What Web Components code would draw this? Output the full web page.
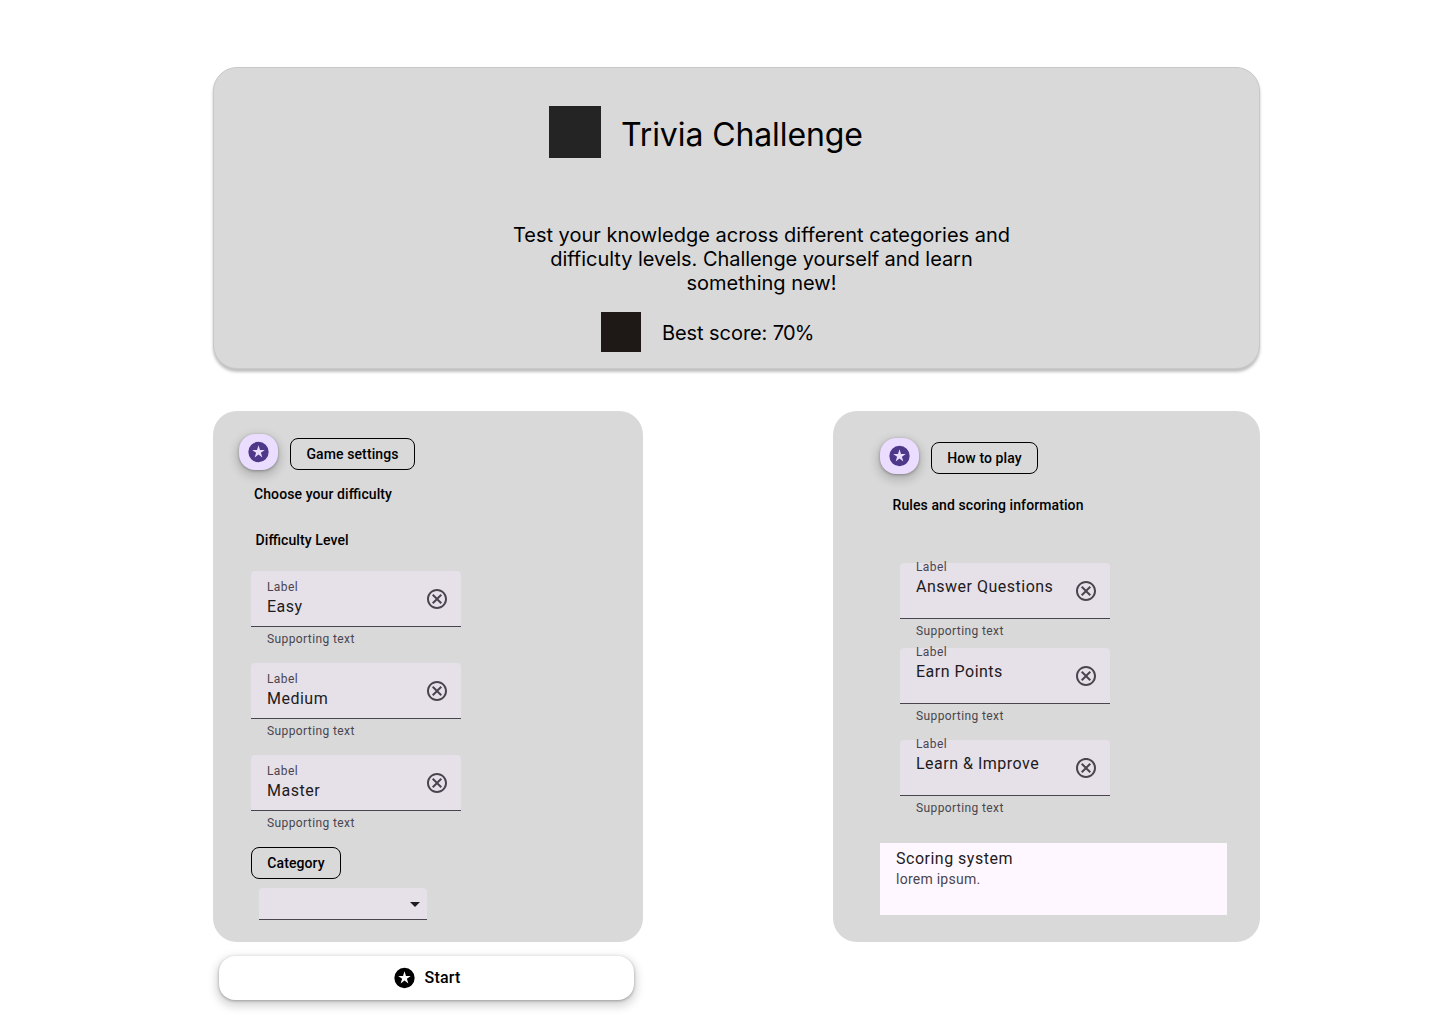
<!DOCTYPE html>
<html lang="en">
<head>
<meta charset="utf-8">
<title>Trivia Challenge</title>
<style>
html,body{margin:0;background:#fff;color:#000}
body{width:1440px;height:1024px;overflow:hidden;font-family:Roboto,"Liberation Sans",sans-serif}
</style>
</head>
<body>
<trivia-app></trivia-app>
<script>
function define(name, render) {
  customElements.define(name, class extends HTMLElement {
    connectedCallback() {
      if (this.shadowRoot) return;
      this.attachShadow({ mode: 'open' }).innerHTML = render(this);
    }
  });
}

const icons = {
  stars: 'M12.5 1.85a10.15 10.15 0 1 0 0 20.3a10.15 10.15 0 1 0 0-20.3zM8.65 17.5L10.1 12.8 6.25 10h4.75L12.5 5.2 14 10h4.75L14.9 12.8l1.45 4.7L12.5 14.6z',
  cancel: 'M8.4 17L12 13.4 15.6 17 17 15.6 13.4 12 17 8.4 15.6 7 12 10.6 8.4 7 7 8.4 10.6 12 7 15.6zM12 2C6.47 2 2 6.47 2 12s4.47 10 10 10 10-4.47 10-10S17.53 2 12 2zm0 18c-4.41 0-8-3.59-8-8s3.59-8 8-8 8 3.59 8 8-3.59 8-8 8z',
  drop: 'M7 10l5 5 5-5z'
};

define('ui-icon', el => `
<style>:host{display:block;width:24px;height:24px;flex:none}svg{display:block;width:100%;height:100%;fill:currentColor}</style>
<svg viewBox="0 0 24 24"><path fill-rule="evenodd" d="${icons[el.getAttribute('name')]}"/></svg>`);

define('ui-fab', () => `
<style>:host{display:flex;align-items:center;justify-content:center;width:39px;height:36px;border-radius:16px;background:#eaddff;color:#4f378a;box-shadow:0 1px 3px rgba(0,0,0,.3),0 4px 8px 3px rgba(0,0,0,.15)}ui-icon{margin-right:1px}</style>
<ui-icon name="stars"></ui-icon>`);

define('ui-chip', () => `
<style>:host{display:flex;align-items:center;justify-content:center;box-sizing:border-box;height:32px;border:1px solid #000;border-radius:8px;font-size:14px;line-height:20px;font-weight:500;letter-spacing:.1px;white-space:nowrap}</style>
<slot></slot>`);

define('ui-caption', () => `
<style>:host{display:block;font-size:14px;line-height:20px;font-weight:500;letter-spacing:.1px;white-space:nowrap;font-feature-settings:"liga" 1}</style>
<slot></slot>`);

define('ui-field', el => `
<style>
:host{display:block;width:210px;height:76px;color:#49454f}
.box{display:flex;box-sizing:border-box;height:56px;padding:0 12px 0 16px;background:#e6e0e9;border-radius:4px 4px 0 0;border-bottom:1px solid #49454f}
.text{flex:1;margin-top:var(--text-top,8px);white-space:nowrap}
.label{font-size:12px;line-height:16px;letter-spacing:.4px}
.value{font-size:16px;line-height:24px;letter-spacing:.5px;color:#1d1b20}
ui-icon{margin-top:16px}
.help{padding:4px 16px 0;font-size:12px;line-height:16px;letter-spacing:.4px}
</style>
<div class="box"><div class="text"><div class="label">Label</div><div class="value"><slot></slot></div></div><ui-icon name="cancel"></ui-icon></div>
<div class="help">Supporting text</div>`);

define('ui-select', () => `
<style>:host{display:flex;align-items:center;justify-content:flex-end;box-sizing:border-box;width:168px;height:32px;background:#e6e0e9;border-bottom:1px solid #49454f;border-radius:4px 4px 0 0;color:#1d1b20}ui-icon{margin-top:1px}</style>
<ui-icon name="drop"></ui-icon>`);

define('ui-start', () => `
<style>:host{display:flex;align-items:center;justify-content:center;gap:8px;box-sizing:border-box;width:415px;height:44px;border-radius:16px;background:#fff;font-size:16px;line-height:24px;font-weight:500;letter-spacing:.15px;box-shadow:0 1px 3px rgba(0,0,0,.3),0 4px 8px 3px rgba(0,0,0,.15)}ui-icon{margin:0 .5px 0 -.5px}</style>
<ui-icon name="stars"></ui-icon><span><slot></slot></span>`);

define('ui-panel', () => `
<style>:host{display:block;box-sizing:border-box;height:531px;border-radius:24px;background:#d9d9d9}</style>
<slot></slot>`);

define('ui-note', () => `
<style>
:host{display:block;box-sizing:border-box;width:347px;height:72px;padding:4px 16px;background:#fef7ff}
.title{font-size:16px;line-height:24px;letter-spacing:.5px;color:#1d1b20}
.body{font-size:14px;line-height:20px;letter-spacing:.25px;color:#49454f;margin-top:-2px}
</style>
<div class="title"><slot name="title"></slot></div><div class="body"><slot></slot></div>`);

define('trivia-hero', () => `
<style>
:host{display:block;box-sizing:border-box;height:302px;padding:38px 0 0;border:1px solid #c8c8c8;border-radius:24px;background:#d9d9d9;box-shadow:0 3px 3px rgba(0,0,0,.25);font-family:Inter,sans-serif;color:#000}
.row{display:flex;align-items:center;white-space:nowrap}
.brand{padding-left:335px;gap:20px;height:52px}
.brand i{width:52px;height:52px;background:#242424}
h1{margin:4px 0 0;font-size:32px;line-height:39px;font-weight:400;letter-spacing:-.1px}
p{margin:65px 0 0 289px;width:517px;font-size:20px;line-height:24px;text-align:center}
.tight{letter-spacing:-.05px}
.score{padding-left:387px;margin-top:17px;gap:21px;height:40px;font-size:20px;line-height:24px}
.score i{width:40px;height:40px;background:#1e1917}
.score span{margin-top:2px;letter-spacing:-.07px}
.score b{font-weight:400;letter-spacing:-.9px}
</style>
<div class="row brand"><i></i><h1>Trivia Challenge</h1></div>
<p>Test your knowledge across different categories and<br><span class="tight">difficulty levels. Challenge yourself and learn</span><br>something new!</p>
<div class="row score"><i></i><span>Best score: <b>70%</b></span></div>`);

define('trivia-app', () => `
<style>
:host{display:block;box-sizing:border-box;width:1440px;height:1024px;padding:67px 180px 0 213px}
.columns{display:flex;justify-content:space-between;align-items:flex-start;margin-top:42px}
.head{display:flex;align-items:flex-start;gap:12px}
.head ui-chip{margin-top:4px}
.left{width:430px;padding:23px 0 0 26px}
.right{width:427px;padding:27px 0 0 47px}
.fields{display:flex;flex-direction:column}
.left .fields{gap:16px;margin:21px 0 0 12px}
.right .fields{margin:48px 0 0 20px;--text-top:-4px}
.right ui-field:nth-child(2){margin-top:9px}
.right ui-field:nth-child(3){margin-top:16px}
</style>
<trivia-hero></trivia-hero>
<div class="columns">
  <div>
    <ui-panel class="left">
      <div class="head"><ui-fab></ui-fab><ui-chip style="width:125px">Game settings</ui-chip></div>
      <ui-caption style="margin:14px 0 0 15px">Choose your difficulty</ui-caption>
      <ui-caption style="margin:26px 0 0 16.5px">Difficulty Level</ui-caption>
      <div class="fields"><ui-field>Easy</ui-field><ui-field>Medium</ui-field><ui-field>Master</ui-field></div>
      <ui-chip style="width:90px;margin:16px 0 0 12px">Category</ui-chip>
      <ui-select style="margin:9px 0 0 20px"></ui-select>
    </ui-panel>
    <ui-start style="margin:14px 0 0 6px">Start</ui-start>
  </div>
  <ui-panel class="right">
    <div class="head"><ui-fab></ui-fab><ui-chip style="width:107px">How to play</ui-chip></div>
    <ui-caption style="margin:21px 0 0 12.5px">Rules and scoring information</ui-caption>
    <div class="fields"><ui-field>Answer Questions</ui-field><ui-field>Earn Points</ui-field><ui-field>Learn &amp; Improve</ui-field></div>
    <ui-note style="margin-top:27px"><span slot="title">Scoring system</span>lorem ipsum.</ui-note>
  </ui-panel>
</div>`);
</script>
</body>
</html>
